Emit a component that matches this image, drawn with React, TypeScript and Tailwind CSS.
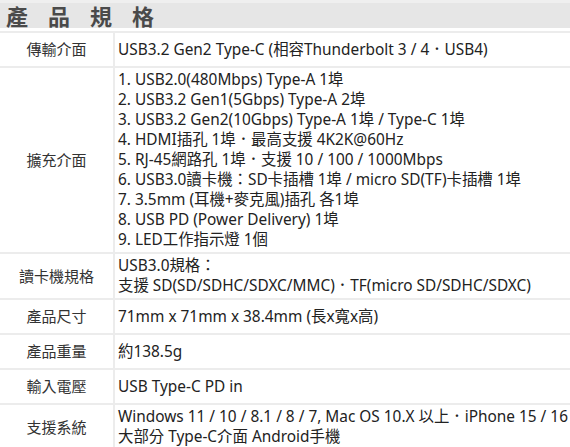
import React from "react";

const rows: { label: string; lines: string[] }[] = [
  { label: "傳輸介面", lines: ["USB3.2 Gen2 Type-C (相容Thunderbolt 3 / 4．USB4)"] },
  {
    label: "擴充介面",
    lines: [
      "1. USB2.0(480Mbps) Type-A 1埠",
      "2. USB3.2 Gen1(5Gbps) Type-A 2埠",
      "3. USB3.2 Gen2(10Gbps) Type-A 1埠 / Type-C 1埠",
      "4. HDMI插孔 1埠．最高支援 4K2K@60Hz",
      "5. RJ-45網路孔 1埠．支援 10 / 100 / 1000Mbps",
      "6. USB3.0讀卡機：SD卡插槽 1埠 / micro SD(TF)卡插槽 1埠",
      "7. 3.5mm (耳機+麥克風)插孔 各1埠",
      "8. USB PD (Power Delivery) 1埠",
      "9. LED工作指示燈 1個",
    ],
  },
  {
    label: "讀卡機規格",
    lines: ["USB3.0規格：", "支援 SD(SD/SDHC/SDXC/MMC)．TF(micro SD/SDHC/SDXC)"],
  },
  { label: "產品尺寸", lines: ["71mm x 71mm x 38.4mm (長x寬x高)"] },
  { label: "產品重量", lines: ["約138.5g"] },
  { label: "輸入電壓", lines: ["USB Type-C PD in"] },
  {
    label: "支援系統",
    lines: [
      "Windows 11 / 10 / 8.1 / 8 / 7, Mac OS 10.X 以上．iPhone 15 / 16",
      "大部分 Type-C介面 Android手機",
    ],
  },
];

export default function App() {
  return (
    <div
      className="w-[570px] h-[447px] overflow-hidden bg-white text-[#222]"
      style={{ fontFamily: '"Noto Sans", "Noto Sans CJK TC", sans-serif' }}
    >
      <div className="h-[28px] bg-[#e6e6e6] border-t-[3px] border-[#efefef] flex items-center pl-[6px]">
        <h2 className="text-[22px] font-bold text-[#4a4a4a] tracking-[20px] leading-none">產品規格</h2>
      </div>
      <div className="mt-[3px]">
        {rows.map((row) => (
          <div
            key={row.label}
            className="grid grid-cols-[115px_1fr] border-t-2 border-[#ececec] min-h-[35px]"
          >
            <div className="flex items-center justify-center border-r-2 border-[#ececec] text-[15px] text-[#333]">
              {row.label}
            </div>
            <div className="flex flex-col justify-center pl-[3px] py-[2px] text-[15.4px] leading-[20px] whitespace-nowrap">
              {row.lines.map((line) => (
                <span key={line}>{line}</span>
              ))}
            </div>
          </div>
        ))}
      </div>
    </div>
  );
}
